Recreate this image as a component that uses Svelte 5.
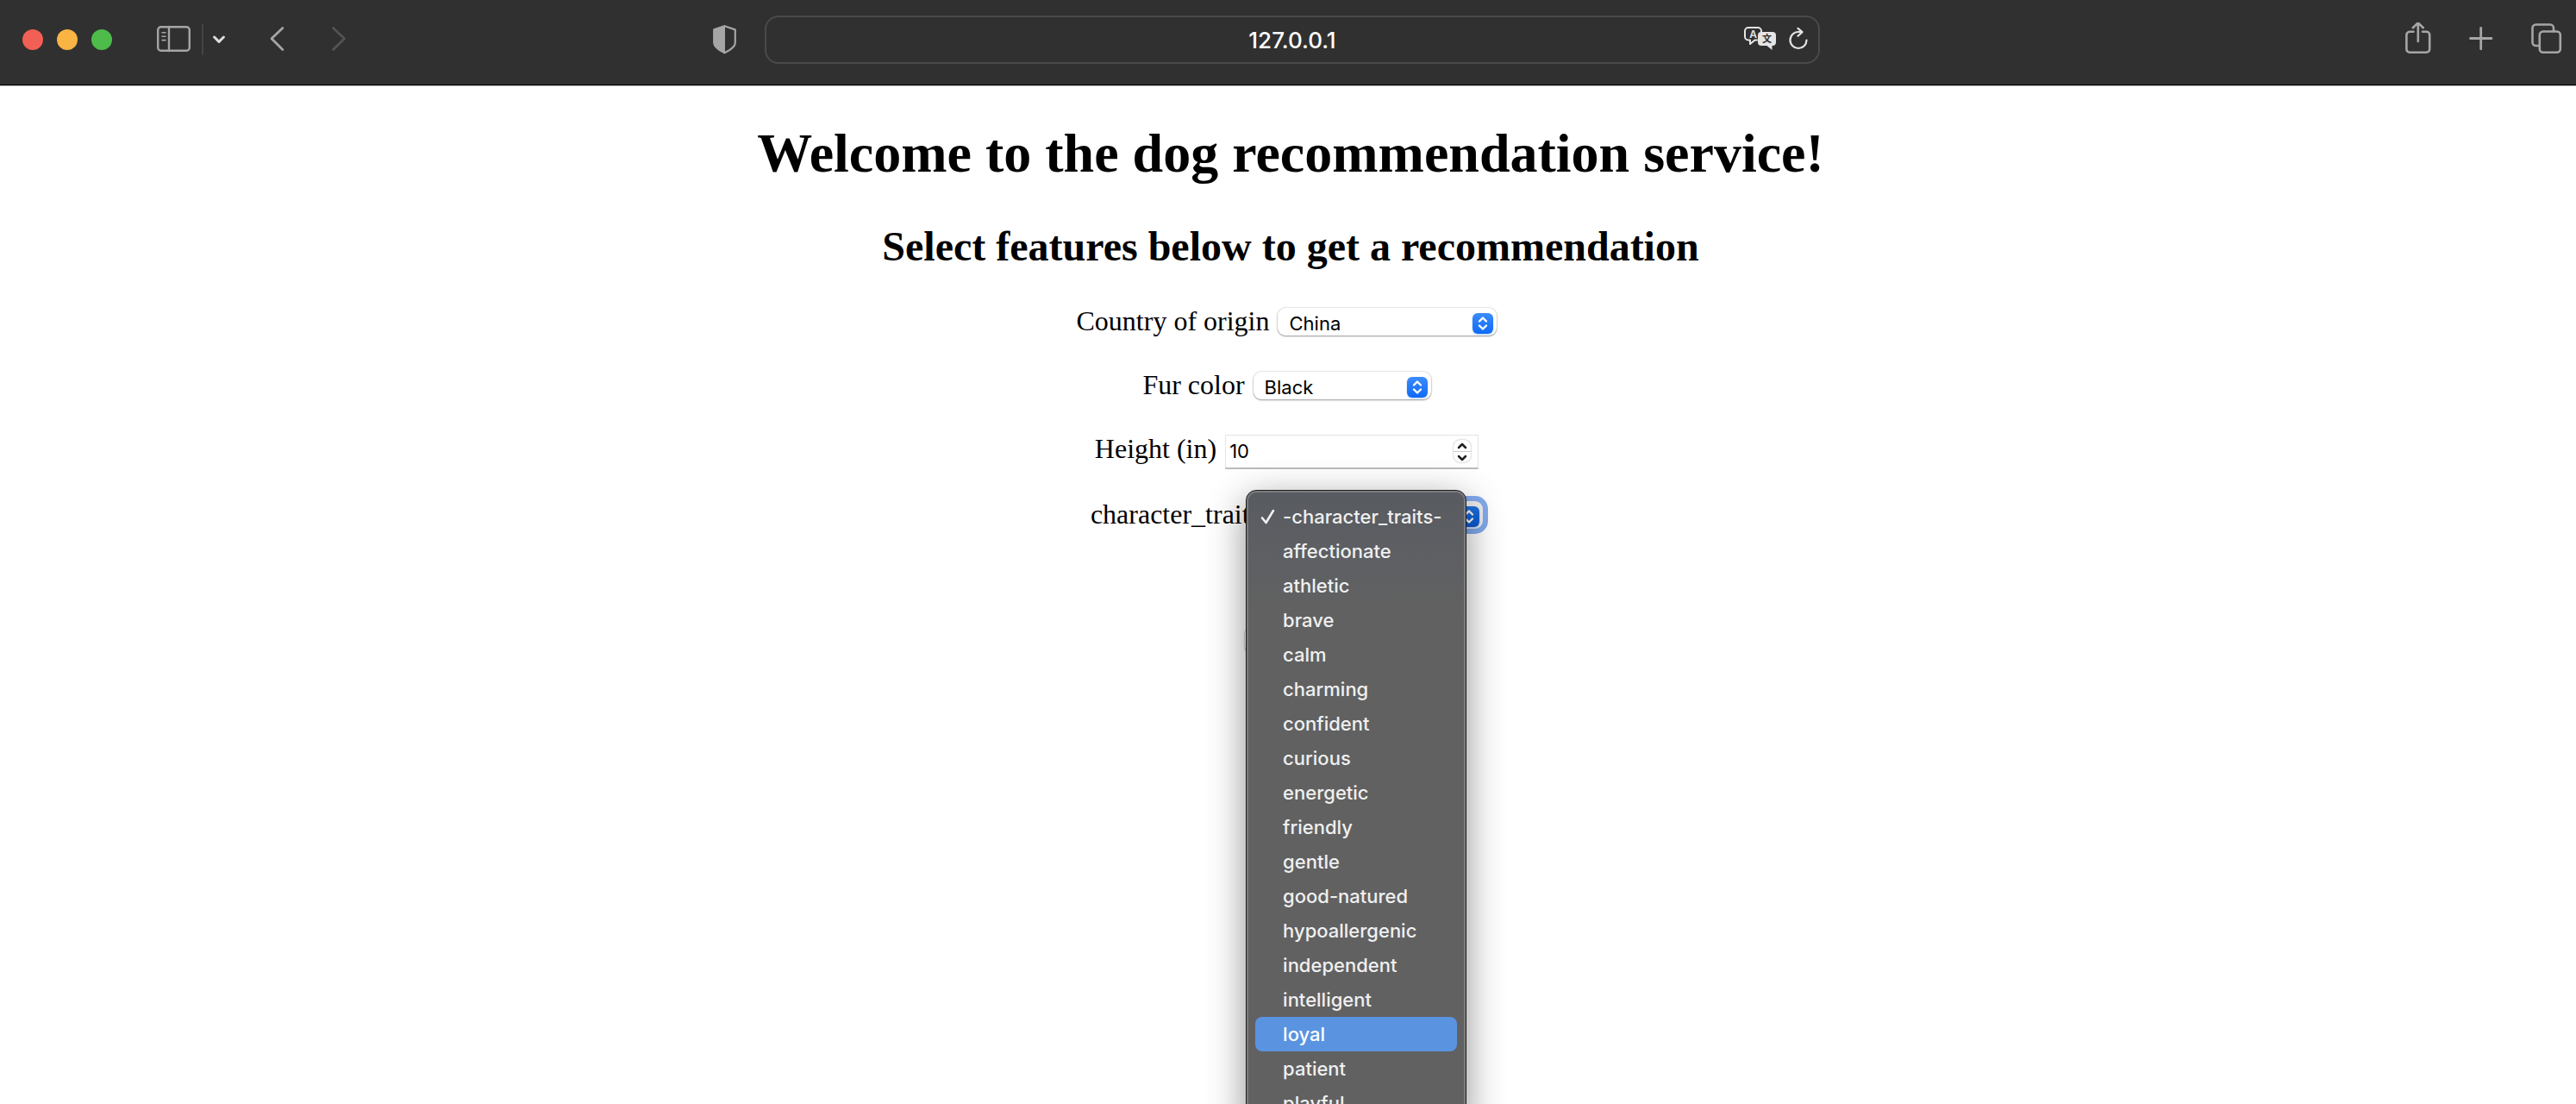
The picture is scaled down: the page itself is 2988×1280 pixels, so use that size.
<script>
  const traits = [
    'affectionate', 'athletic', 'brave', 'calm', 'charming', 'confident',
    'curious', 'energetic', 'friendly', 'gentle', 'good-natured',
    'hypoallergenic', 'independent', 'intelligent', 'loyal', 'patient',
    'playful'
  ];
  const highlighted = 'loyal';
  let country = $state('China');
  let fur = $state('Black');
  let height = $state(10);
  let trait = $state('-character_traits-');
</script>

{#snippet arrows()}
  <svg class="arrows" viewBox="0 0 24 24" aria-hidden="true">
    <path d="M8 9.5 12 5.5l4 4M8 14.5l4 4 4-4" />
  </svg>
{/snippet}

<div class="window">
  <header class="toolbar">
    <div class="side">
      <div class="lights">
        <button class="light close" aria-label="Close"></button>
        <button class="light minimize" aria-label="Minimize"></button>
        <button class="light zoom" aria-label="Zoom"></button>
      </div>
      <button class="tool sidebar" aria-label="Sidebar">
        <svg width="40" height="40" viewBox="0 0 40 40">
          <rect x="1.2" y="5.2" width="36.6" height="27.6" rx="3.5" stroke-width="2.4" />
          <path d="M14 5v28" stroke-width="2.4" />
          <path d="M6 11.7h4M6 16.2h4M6 20.6h4" stroke-width="1.6" />
        </svg>
      </button>
      <span class="divider"></span>
      <button class="tool menu" aria-label="Tab groups">
        <svg width="16" height="40" viewBox="0 0 16 40"><path d="m2.6 17 5.4 5.4 5.4-5.4" stroke-width="3" /></svg>
      </button>
      <button class="tool back" aria-label="Back">
        <svg width="18" height="40" viewBox="0 0 18 40"><path d="M15.8 6.5 3 18.8l12.8 12.7" stroke-width="2.8" /></svg>
      </button>
      <button class="tool forward" aria-label="Forward">
        <svg width="18" height="40" viewBox="0 0 18 40"><path d="M2.5 6.5 15.5 18.8 2.5 31.5" stroke-width="2.8" /></svg>
      </button>
      <button class="tool shield" aria-label="Privacy report">
        <svg width="28" height="40" viewBox="0 0 28 40">
          <path d="M13.5 4.2 1.2 8.4V23.5c0 6 8 9.5 12.3 11.8 4.3-2.3 12.3-5.8 12.3-11.8V8.4z" stroke-width="2.2" />
          <path class="solid" d="M14 3 1 8v17c2 5 8 8 13 10.5z" />
        </svg>
      </button>
    </div>

    <div class="address">
      <input aria-label="Address" value="127.0.0.1" />
      <div class="address-tools">
        <button class="tool" aria-label="Translate">
          <svg width="38" height="40" viewBox="0 0 38 40">
            <path d="M15 20.5h-2.5L7 25v-4.500H5a4 4 0 0 1-4-4V10a4 4 0 0 1 4-4h11a4 4 0 0 1 4 4v1" stroke-width="2" />
            <path class="solid" d="M20 11h13a4 4 0 0 1 4 4v8a4 4 0 0 1-4 4h-.5v5l-6-5H20a4 4 0 0 1-4-4v-8a4 4 0 0 1 4-4z" />
            <text class="latin" x="10.5" y="18">A</text>
            <text class="han" x="26.5" y="23">文</text>
          </svg>
        </button>
        <button class="tool" aria-label="Reload">
          <svg width="22" height="40" viewBox="0 0 22 40">
            <path d="M20.500 20.500a9.500 9.500 0 1 1-9.500-9.500h4M10.500 6.800l5 4.400-5 4.600" stroke-width="2.2" />
          </svg>
        </button>
      </div>
    </div>

    <div class="side actions">
      <button class="tool" aria-label="Share">
        <svg width="30" height="40" viewBox="0 0 30 40">
          <path d="M9.500 10.800H5A3.700 3.700 0 0 0 1.400 14.500V31A3.700 3.700 0 0 0 5 34.700h19.500A3.700 3.700 0 0 0 28.200 31V14.500a3.700 3.700 0 0 0-3.700-3.700H20M14.800 22V1M8.800 6.200l6-5.800 6 5.800" stroke-width="2.6" />
        </svg>
      </button>
      <button class="tool" aria-label="New tab">
        <svg width="28" height="40" viewBox="0 0 28 40"><path d="M1.5 18.5h24.500M13.700 6.300v24.500" stroke-width="2.8" /></svg>
      </button>
      <button class="tool" aria-label="Tab overview">
        <svg width="36" height="40" viewBox="0 0 36 40">
          <rect x="9.8" y="10.5" width="24" height="24.2" rx="4" stroke-width="2.6" />
          <path d="M9 27H5.500a4 4 0 0 1-4-4V6.500a4 4 0 0 1 4-4H22a4 4 0 0 1 4 4V10" stroke-width="2.6" />
        </svg>
      </button>
    </div>
  </header>

  <main>
    <h1>Welcome to the dog recommendation service!</h1>
    <h2>Select features below to get a recommendation</h2>

    <form onsubmit={(e) => e.preventDefault()}>
      <div class="row">
        <label for="country">Country of origin</label>
        <div class="select country">
          <select id="country" bind:value={country}><option>China</option><option>Germany</option></select>
          {@render arrows()}
        </div>
      </div>
      <div class="row">
        <label for="fur">Fur color</label>
        <div class="select fur">
          <select id="fur" bind:value={fur}><option>Black</option><option>White</option></select>
          {@render arrows()}
        </div>
      </div>
      <div class="row">
        <label for="height">Height (in)</label>
        <div class="number">
          <input id="height" type="number" bind:value={height} />
          <div class="stepper">
            <button type="button" aria-label="Increase" onclick={() => height++}>
              <svg viewBox="0 0 20 13"><path d="m6 9 4-4 4 4" /></svg>
            </button>
            <button type="button" aria-label="Decrease" onclick={() => height--}>
              <svg viewBox="0 0 20 13"><path d="m6 5 4 4 4-4" /></svg>
            </button>
          </div>
        </div>
      </div>
      <div class="row traits-row">
        <label for="traits">character_traits</label>
        <div class="select traits">
          <select id="traits" bind:value={trait}>
            <option>-character_traits-</option>
            {#each traits as name}<option>{name}</option>{/each}
          </select>
          {@render arrows()}
          <ul class="popup" role="listbox" aria-label="character_traits">
            <li role="option" aria-selected="true">
              <svg class="check" width="18" height="20" viewBox="0 0 18 20" aria-hidden="true"><path d="m2 11.5 4.500 5.500L15 3" /></svg>
              -character_traits-
            </li>
            {#each traits as name}
              <li role="option" aria-selected="false" class:highlighted={name === highlighted}>{name}</li>
            {/each}
          </ul>
        </div>
      </div>
      <button class="submit" type="submit" aria-label="Submit"></button>
    </form>
  </main>
</div>

<style>
  :global(body) { background: #fff; }
  .window {
    height: 100vh;
    overflow: hidden;
    color: #000;
    font-family: "Liberation Serif", "Times New Roman", serif;
    font-size: 32px;
  }
  button, input, select { font: inherit; color: inherit; margin: 0; padding: 0; border: 0; background: none; }

  .toolbar {
    display: grid;
    grid-template-columns: 1fr minmax(0, 1224px) 1fr;
    align-items: center;
    box-sizing: border-box;
    padding: 18px 16px 24px 26px;
    background: #303030;
    border-bottom: 1px solid #000;
    box-shadow: 0 1px #b8b8b8;
    font-family: Inter, sans-serif;
    color: #a5a5a5;
  }
  .side { display: flex; align-items: center; }
  .lights { display: flex; gap: 16px; }
  .light { width: 24px; height: 24px; border-radius: 50%; }
  .close { background: #f25f54; }
  .minimize { background: #f9b443; }
  .zoom { background: #4ebc4b; }
  .tool { display: block; }
  .tool svg { display: block; fill: none; stroke: currentColor; stroke-linecap: round; stroke-linejoin: round; }
  .tool .solid { fill: currentColor; stroke: none; }
  .sidebar { margin-left: 52px; }
  .divider { width: 2px; height: 36px; margin-left: 12px; background: #444; }
  .menu { margin-left: 10px; color: #dcdcdc; }
  .back { margin-left: 50px; }
  .forward { margin-left: 54px; color: #535353; }
  .shield { margin-left: auto; margin-right: 32px; }
  .actions { justify-content: flex-end; gap: 44px; }
  .address {
    display: flex;
    align-items: center;
    box-sizing: border-box;
    height: 56px;
    padding: 0 12px 0 86px;
    border: 2px solid #4a4a4a;
    border-radius: 16px;
    color: #e4e4e4;
  }
  .address input { flex: 1; min-width: 0; text-align: center; font-size: 26px; font-weight: 500; color: #fff; }
  .address-tools { display: flex; gap: 14px; }
  .tool text { text-anchor: middle; stroke: none; }
  .latin { font: 600 12px Inter, sans-serif; fill: #e4e4e4; }
  .han { font: 700 11px "Noto Sans CJK SC", sans-serif; fill: #303030; }

  main { padding: 0 16px; text-align: center; }
  h1, h2 { margin: 0; padding-left: 6px; font-weight: bold; }
  h1 { padding-top: 42px; font-size: 64px; line-height: 74px; }
  h2 { padding-top: 43px; font-size: 48px; line-height: 56px; }

  form { display: flex; flex-direction: column; align-items: center; gap: 38px; padding: 40px 3px 0 0; }
  .row { display: flex; align-items: baseline; gap: 10px; height: 36px; line-height: 36px; }
  .traits-row { margin-top: 2px; }
  .select { position: relative; font-family: Inter, sans-serif; font-size: 22px; }
  .select select {
    appearance: none;
    box-sizing: border-box;
    width: 100%;
    height: 32px;
    padding: 0 36px 2px 13px;
    border-radius: 9px;
    background: #fff;
    box-shadow: 0 0 1px 1px #00000018, 0 1px 2px #00000058;
    outline: none;
  }
  .country { width: 254px; }
  .fur { width: 206px; }
  .traits { width: 248px; }
  .arrows {
    position: absolute;
    right: 4px;
    top: 6px;
    width: 24px;
    height: 24px;
    border-radius: 6px;
    background: linear-gradient(#3b8cfb, #0f6af5);
    box-shadow: 0 1px 2px #1a73f555;
    fill: none;
    stroke: #fff;
    stroke-width: 2.4;
    stroke-linecap: round;
    stroke-linejoin: round;
    pointer-events: none;
  }
  .traits select { box-shadow: 0 0 0 6px #83abee; background: #eee; }
  .traits .arrows { background: linear-gradient(#2071de, #0a57d4); }

  .number { display: flex; align-items: center; box-sizing: border-box; width: 294px; height: 40px; padding: 0 8px 0 4px; border: 1px solid #e4e4e4; border-bottom: 2px solid #bcbcbc; font-family: Inter, sans-serif; font-size: 22px; }
  .number input { flex: 1; min-width: 0; appearance: textfield; outline: none; }
  .number input::-webkit-inner-spin-button { appearance: none; margin: 0; }
  .stepper { width: 20px; border-radius: 8px; background: #fff; box-shadow: 0 0 2px #0006; }
  .stepper button { display: block; width: 20px; height: 13px; }
  .stepper button + button { border-top: 1px solid #ccc; }
  .stepper svg { display: block; width: 20px; height: 13px; fill: none; stroke: #222; stroke-width: 2.5; stroke-linecap: round; stroke-linejoin: round; }

  .popup {
    position: absolute;
    z-index: 1;
    top: -13px;
    right: 19px;
    box-sizing: border-box;
    width: 256px;
    margin: 0;
    padding: 10px;
    list-style: none;
    text-align: left;
    color: #f0f0f0;
    font-weight: 500;
    line-height: 40px;
    border: 1px solid #1c1c1c;
    border-radius: 12px;
    background: linear-gradient(#585b61, #5d5f63 70px, #616161 140px);
    box-shadow: inset 0 0 0 2px #7c7c7c, 0 12px 44px #00000070;
  }
  .popup li { display: flex; align-items: center; height: 40px; padding-left: 32px; border-radius: 8px; white-space: nowrap; }
  .popup .highlighted { background: #5a94e0; color: #fff; }
  .check { flex: none; margin-left: -26px; margin-right: 8px; fill: none; stroke: #f0f0f0; stroke-width: 2.6; stroke-linecap: round; stroke-linejoin: round; }
  .submit { width: 98px; height: 32px; margin-top: 74px; border-radius: 9px; box-shadow: 0 0 1px 1px #00000018, 0 1px 2px #00000058; }
</style>
